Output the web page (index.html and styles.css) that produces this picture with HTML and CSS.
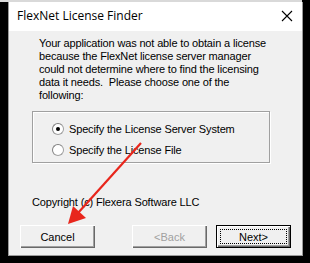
FILE: index.html
```html
<!DOCTYPE html>
<html lang="en">
<head>
  <meta charset="UTF-8" />
  <title>FlexNet License Finder</title>
  <link rel="stylesheet" href="styles.css">
</head>
<body>
  <div class="back-strip"></div>
  <div class="window">
    <div class="titlebar">
      <span class="title">FlexNet License Finder</span>
      <svg class="close" width="12" height="12" viewBox="0 0 12 12">
        <path d="M1 1 L11 11 M11 1 L1 11" stroke="#000" stroke-width="1.1" fill="none"/>
      </svg>
    </div>

    <div class="client">
      <p class="message">
        Your application was not able to obtain a license<br>
        because the FlexNet license server manager<br>
        could not determine where to find the licensing<br>
        data it needs.&nbsp; Please choose one of the<br>
        following:
      </p>

      <div class="group">
        <label class="option">
          <span class="radio checked"></span>
          Specify the License Server System
        </label>
        <label class="option">
          <span class="radio"></span>
          Specify the License File
        </label>
      </div>

      <p class="copyright">Copyright (c) Flexera Software LLC</p>

      <div class="buttons">
        <button class="btn">Cancel</button>
        <div class="btn-right">
          <button class="btn disabled">&lt;Back</button>
          <button class="btn default"><span class="focus">Next&gt;</span></button>
        </div>
      </div>
    </div>
  </div>

  <!-- annotation arrow pointing at Cancel -->
  <svg class="arrow" width="310" height="263" viewBox="0 0 310 263">
    <line x1="141" y1="143" x2="78" y2="213" stroke="#e8261c" stroke-width="2.2"/>
    <polygon points="68,224 73,206 86,218" fill="#e8261c"/>
  </svg>
</body>
</html>
```

FILE: styles.css
```css
body {
  margin: 0;
  width: 310px;
  height: 263px;
  background-color: #000;
  position: relative;
  overflow: hidden;
}

.back-strip {
  height: 2px;
  width: 302px;
  background-color: #d9d9d9;
}

.window {
  margin-left: 8px;
  width: 293px;
  height: 253px;
  border: 1px solid #9a9a9a;
  border-top: none;
  background-color: #f0f0f0;
  display: flex;
  flex-direction: column;
}

.titlebar {
  height: 29px;
  background-color: #fff;
  display: flex;
  align-items: center;
  justify-content: space-between;
  padding: 0 9px 0 8px;
}

.title {
  font-family: "Open Sans", "Noto Sans", sans-serif;
  font-size: 12px;
  color: #000;
  margin-top: -2px;
}

.close {
  margin-top: -2px;
}

.client {
  flex: 1;
  font-family: "Liberation Sans", Arial, sans-serif;
  font-size: 11px;
  letter-spacing: -0.15px;
  color: #000;
  padding: 0 0 0 11px;
}

.message {
  margin: 6px 0 0 19px;
  line-height: 13px;
}

.group {
  margin: 9px 0 0 12px;
  width: 238px;
  height: 52px;
  border: 1px solid #a0a0a0;
  box-shadow: inset 1px 1px 0 #fff, 1px 1px 0 #fff;
  display: flex;
  flex-direction: column;
  gap: 8px;
  padding: 10px 0 0 19px;
  box-sizing: border-box;
}

.option {
  display: flex;
  align-items: center;
  gap: 5px;
  height: 13px;
}

.radio {
  width: 10px;
  height: 10px;
  border-radius: 50%;
  border: 1px solid #a0a0a0;
  border-top-color: #808080;
  border-left-color: #808080;
  background-color: #fff;
  display: flex;
  align-items: center;
  justify-content: center;
}

.radio.checked::after {
  content: "";
  width: 4px;
  height: 4px;
  border-radius: 50%;
  background-color: #000;
}

.copyright {
  margin: 33px 0 0 12px;
  line-height: 13px;
}

.buttons {
  display: flex;
  justify-content: space-between;
  margin: 16px 0 0 0;
  width: 271px;
}

.btn-right {
  display: flex;
  gap: 9px;
}

.btn {
  width: 75px;
  height: 23px;
  font-family: "Liberation Sans", Arial, sans-serif;
  font-size: 11px;
  color: #000;
  background-color: #f0f0f0;
  border: none;
  padding: 0;
  box-shadow: inset 1px 1px 0 #fff, inset -1px -1px 0 #696969, inset -2px -2px 0 #a0a0a0;
}

.btn.disabled {
  color: #a0a0a0;
}

.btn.default {
  border: 1px solid #000;
  display: flex;
  align-items: center;
  justify-content: center;
  padding: 3px;
}

.focus {
  flex: 1;
  align-self: stretch;
  border: 1px dotted #000;
  display: flex;
  align-items: center;
  justify-content: center;
}

.arrow {
  position: absolute;
  left: 0;
  top: 0;
  pointer-events: none;
}
```
